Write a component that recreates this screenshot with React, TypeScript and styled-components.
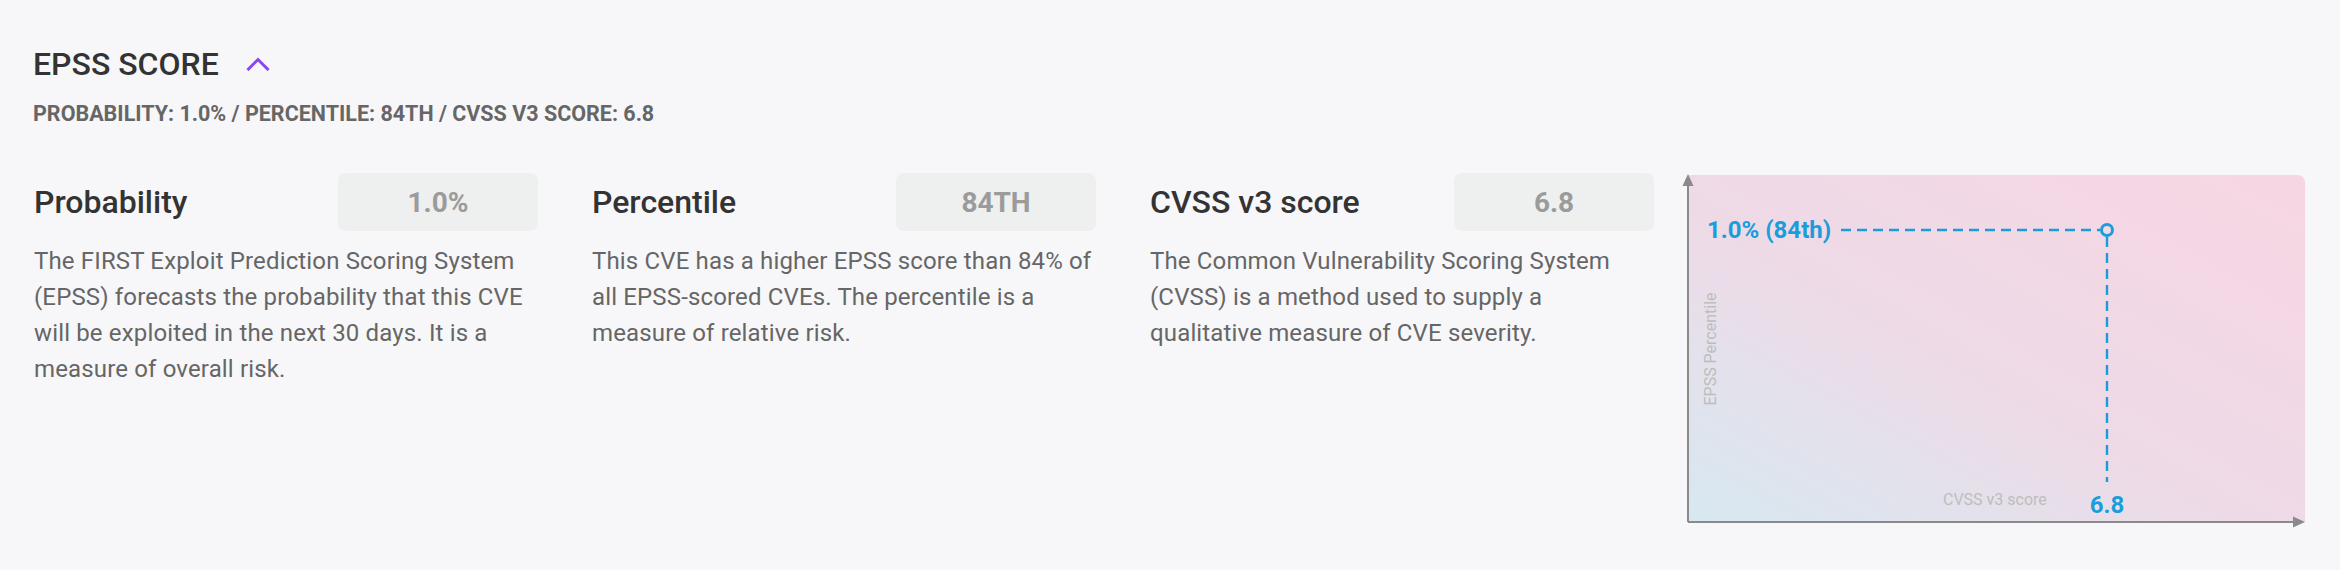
// EPSS score panel

// ___________________________________________________________________

import * as React from 'react'
import styled, { createGlobalStyle } from 'styled-components'

// ___________________________________________________________________

const metrics = [
  {
    label: 'Probability',
    value: '1.0%',
    text: 'The FIRST Exploit Prediction Scoring System (EPSS) forecasts the probability that this CVE will be exploited in the next 30 days. It is a measure of overall risk.',
  },
  {
    label: 'Percentile',
    value: '84TH',
    text: 'This CVE has a higher EPSS score than 84% of all EPSS-scored CVEs. The percentile is a measure of relative risk.',
  },
  {
    label: 'CVSS v3 score',
    value: '6.8',
    text: 'The Common Vulnerability Scoring System (CVSS) is a method used to supply a qualitative measure of CVE severity.',
  },
]

const blue = '#1a9edb'
const axis = '#8a8a8a'

// ___________________________________________________________________

const Chevron = () => (
  <svg width="24" height="14" viewBox="0 0 24 14">
    <polyline
      points="2.5,12 12,2.5 21.5,12"
      fill="none"
      stroke="currentColor"
      strokeWidth="3"
      strokeLinecap="square"
    />
  </svg>
)

const Chart = () => (
  <ChartSvg width="630" height="360" viewBox="0 0 630 360">
    <defs>
      <linearGradient id="bg" x1="0" y1="1" x2="1" y2="0">
        <stop offset="0" stopColor="#d7e8f1" />
        <stop offset="0.22" stopColor="#e2e2ec" />
        <stop offset="0.45" stopColor="#eedae7" />
        <stop offset="1" stopColor="#f7d6e3" />
      </linearGradient>
    </defs>
    <path d="M6 2 H615 Q623 2 623 10 V349 H6 Z" fill="url(#bg)" />

    {/* axes */}
    <line x1="6" y1="349" x2="6" y2="12" stroke={axis} strokeWidth="2" />
    <polygon points="0.5,13 11.5,13 6,1" fill={axis} />
    <line x1="6" y1="349" x2="612" y2="349" stroke={axis} strokeWidth="2" />
    <polygon points="611,343.5 611,354.5 623,349" fill={axis} />

    {/* guides */}
    <line x1="159" y1="57" x2="418" y2="57" stroke={blue} strokeWidth="2.4" strokeDasharray="10 6" />
    <line x1="425" y1="64" x2="425" y2="309" stroke={blue} strokeWidth="2.4" strokeDasharray="10 6" />
    <circle cx="425" cy="57" r="5.5" fill="none" stroke={blue} strokeWidth="3" />

    <text x="25" y="65" className="point">1.0% (84th)</text>
    <text x="425" y="340" textAnchor="middle" className="point">6.8</text>
    <text x="261" y="332" className="axis">CVSS v3 score</text>
    <text x="34" y="176" textAnchor="middle" transform="rotate(-90 34 176)" className="axis">
      EPSS Percentile
    </text>
  </ChartSvg>
)

const App = () => (
  <>
    <GlobalStyle />
    <Page>
      <Header>
        <Title>EPSS SCORE</Title>
        <Toggle aria-label="Collapse">
          <Chevron />
        </Toggle>
      </Header>
      <Summary>PROBABILITY: 1.0% / PERCENTILE: 84TH / CVSS V3 SCORE: 6.8</Summary>

      <Body>
        <Cards>
          {metrics.map(m => (
            <Card key={m.label}>
              <CardHead>
                <CardTitle>{m.label}</CardTitle>
                <Value>{m.value}</Value>
              </CardHead>
              <Description>{m.text}</Description>
            </Card>
          ))}
        </Cards>
        <Chart />
      </Body>
    </Page>
  </>
)

export default App

// ___________________________________________________________________

const GlobalStyle = createGlobalStyle`
  html, body {
    margin: 0;
    background: #f7f7f9;
  }
  body {
    font-family: Roboto, "Liberation Sans", Arial, sans-serif;
  }
`

const Page = styled.div`
  box-sizing: border-box;
  min-height: 570px;
  padding: 44px 34px 40px 34px;
`

const Header = styled.div`
  display: flex;
  align-items: center;
  gap: 27px;
  margin-left: -1px;
`

const Title = styled.h2`
  margin: 0;
  font-size: 32px;
  line-height: 40px;
  font-weight: 500;
  color: #333;
`

const Toggle = styled.button`
  display: flex;
  padding: 0;
  border: 0;
  background: none;
  color: #8b45f7;
  cursor: pointer;
`

const Summary = styled.div`
  margin-top: 15px;
  margin-left: -1px;
  font-size: 21.5px;
  line-height: 30px;
  font-weight: 700;
  color: #666;
`

const Body = styled.div`
  display: flex;
  align-items: flex-start;
  gap: 28px;
  margin-top: 44px;
`

const Cards = styled.div`
  display: grid;
  grid-template-columns: repeat(3, 504px);
  column-gap: 54px;
`

const Card = styled.div`
  display: flex;
  flex-direction: column;
`

const CardHead = styled.div`
  display: flex;
  align-items: center;
  justify-content: space-between;
`

const CardTitle = styled.h3`
  margin: 0;
  font-size: 32px;
  line-height: 40px;
  font-weight: 500;
  color: #333;
`

const Value = styled.div`
  display: flex;
  align-items: center;
  justify-content: center;
  width: 200px;
  height: 58px;
  border-radius: 8px;
  background: #eeefef;
  font-size: 28px;
  font-weight: 700;
  color: #9b9b9b;
`

const Description = styled.p`
  margin: 12px 0 0;
  font-size: 24px;
  line-height: 36px;
  letter-spacing: 0.15px;
  color: #666;
`

const ChartSvg = styled.svg`
  display: block;
  flex: none;
  overflow: visible;

  .point {
    font-family: Roboto, "Liberation Sans", Arial, sans-serif;
    font-size: 24px;
    font-weight: 700;
    fill: ${blue};
  }

  .axis {
    font-family: Roboto, "Liberation Sans", Arial, sans-serif;
    font-size: 16px;
    fill: #bdbdbd;
  }
`
